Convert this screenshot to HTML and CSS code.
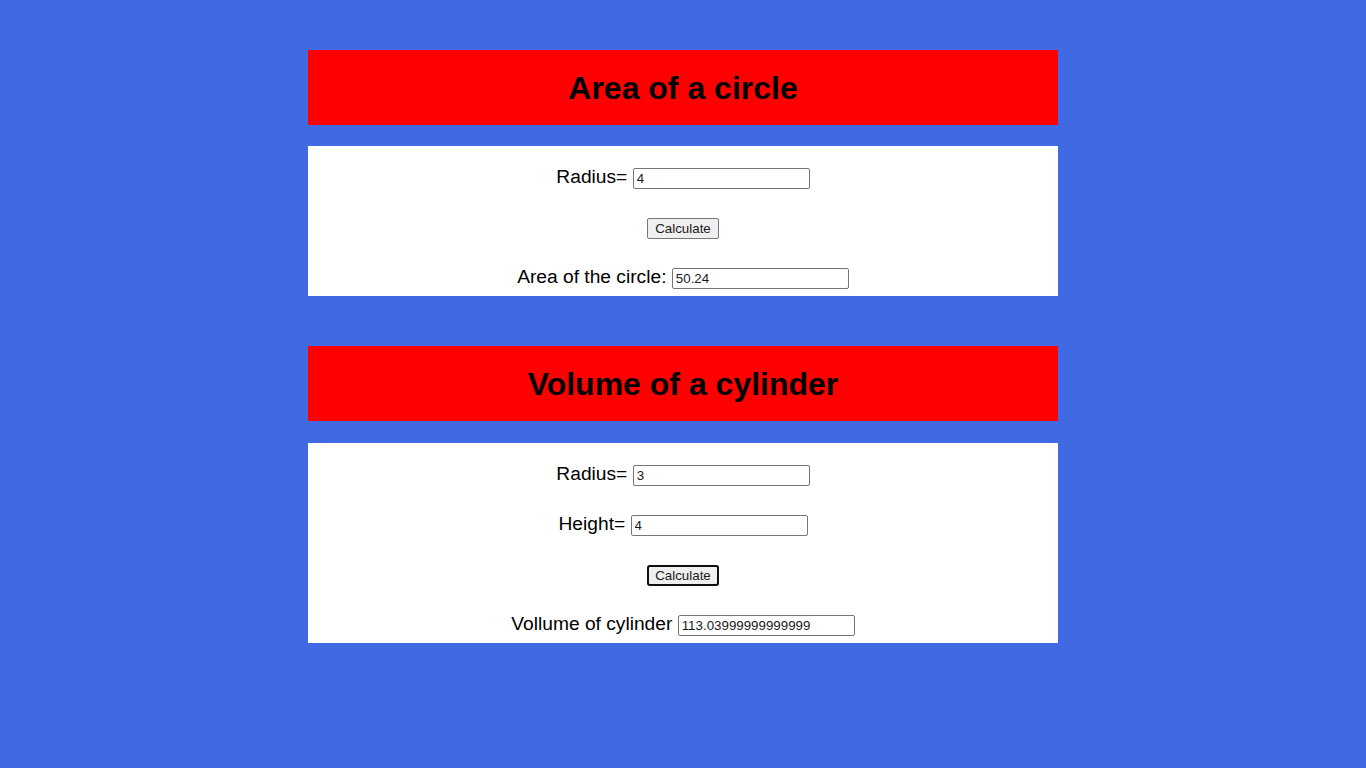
FILE: index.html
```html
<!DOCTYPE html>
<html lang="en">
<head>
<meta charset="utf-8">
<title>Area and Volume</title>
<link rel="stylesheet" href="styles.css">
</head>
<body>
<main class="page">
  <section class="calc">
    <header class="banner"><h1>Area of a circle</h1></header>
    <div class="panel panel-short">
      <p class="row">Radius= <input type="text" value="4"></p>
      <p class="row"><button type="button">Calculate</button></p>
      <p class="row">Area of the circle: <input type="text" value="50.24"></p>
    </div>
  </section>
  <section class="calc calc-second">
    <header class="banner"><h1>Volume of a cylinder</h1></header>
    <div class="panel panel-tall">
      <p class="row">Radius= <input type="text" value="3"></p>
      <p class="row">Height= <input type="text" value="4"></p>
      <p class="row"><button type="button" class="focused">Calculate</button></p>
      <p class="row">Vollume of cylinder <input type="text" value="113.03999999999999"></p>
    </div>
  </section>
</main>
</body>
</html>
```

FILE: styles.css
```css
html, body {
  margin: 0;
  padding: 0;
}

body {
  background: #4169e1;
  font-family: "Liberation Sans", Arial, sans-serif;
  color: #000;
  min-height: 768px;
}

.page {
  width: 750px;
  margin: 0 auto;
  padding-top: 50px;
}

.calc-second {
  margin-top: 50px;
}

.banner {
  background: #ff0000;
  height: 75px;
  display: flex;
  align-items: center;
  justify-content: center;
}

.banner h1 {
  margin: 0;
  padding-top: 1px;
  font-size: 32px;
  font-weight: bold;
  line-height: 37px;
}

.panel {
  background: #fff;
  margin-top: 21px;
  box-sizing: border-box;
  padding-top: 20px;
  display: flex;
  flex-direction: column;
  gap: 28px;
}

.calc-second .panel {
  margin-top: 22px;
}

.panel-short {
  height: 150px;
}

.panel-tall {
  height: 200px;
}

.row {
  margin: 0;
  text-align: center;
  font-size: 19.2px;
  line-height: 22px;
  height: 22px;
}

.row input {
  font-family: Arial, "Liberation Sans", sans-serif;
  font-size: 13.33px;
  width: 177px;
  height: 21px;
  box-sizing: border-box;
  padding: 1px 2px 1px 3px;
  border: 1px solid #767676;
  border-radius: 2px;
  margin: 0;
  vertical-align: baseline;
  color: #1a1a1a;
  background: #fff;
}

.row button {
  font-family: Arial, "Liberation Sans", sans-serif;
  font-size: 13.33px;
  height: 21px;
  box-sizing: border-box;
  padding: 1px 7px;
  border: 1px solid #767676;
  border-radius: 2px;
  background: #efefef;
  color: #1a1a1a;
  margin: 0;
}

.row button.focused {
  outline: 2px solid #101010;
  outline-offset: -2px;
  border-radius: 3px;
}
```
